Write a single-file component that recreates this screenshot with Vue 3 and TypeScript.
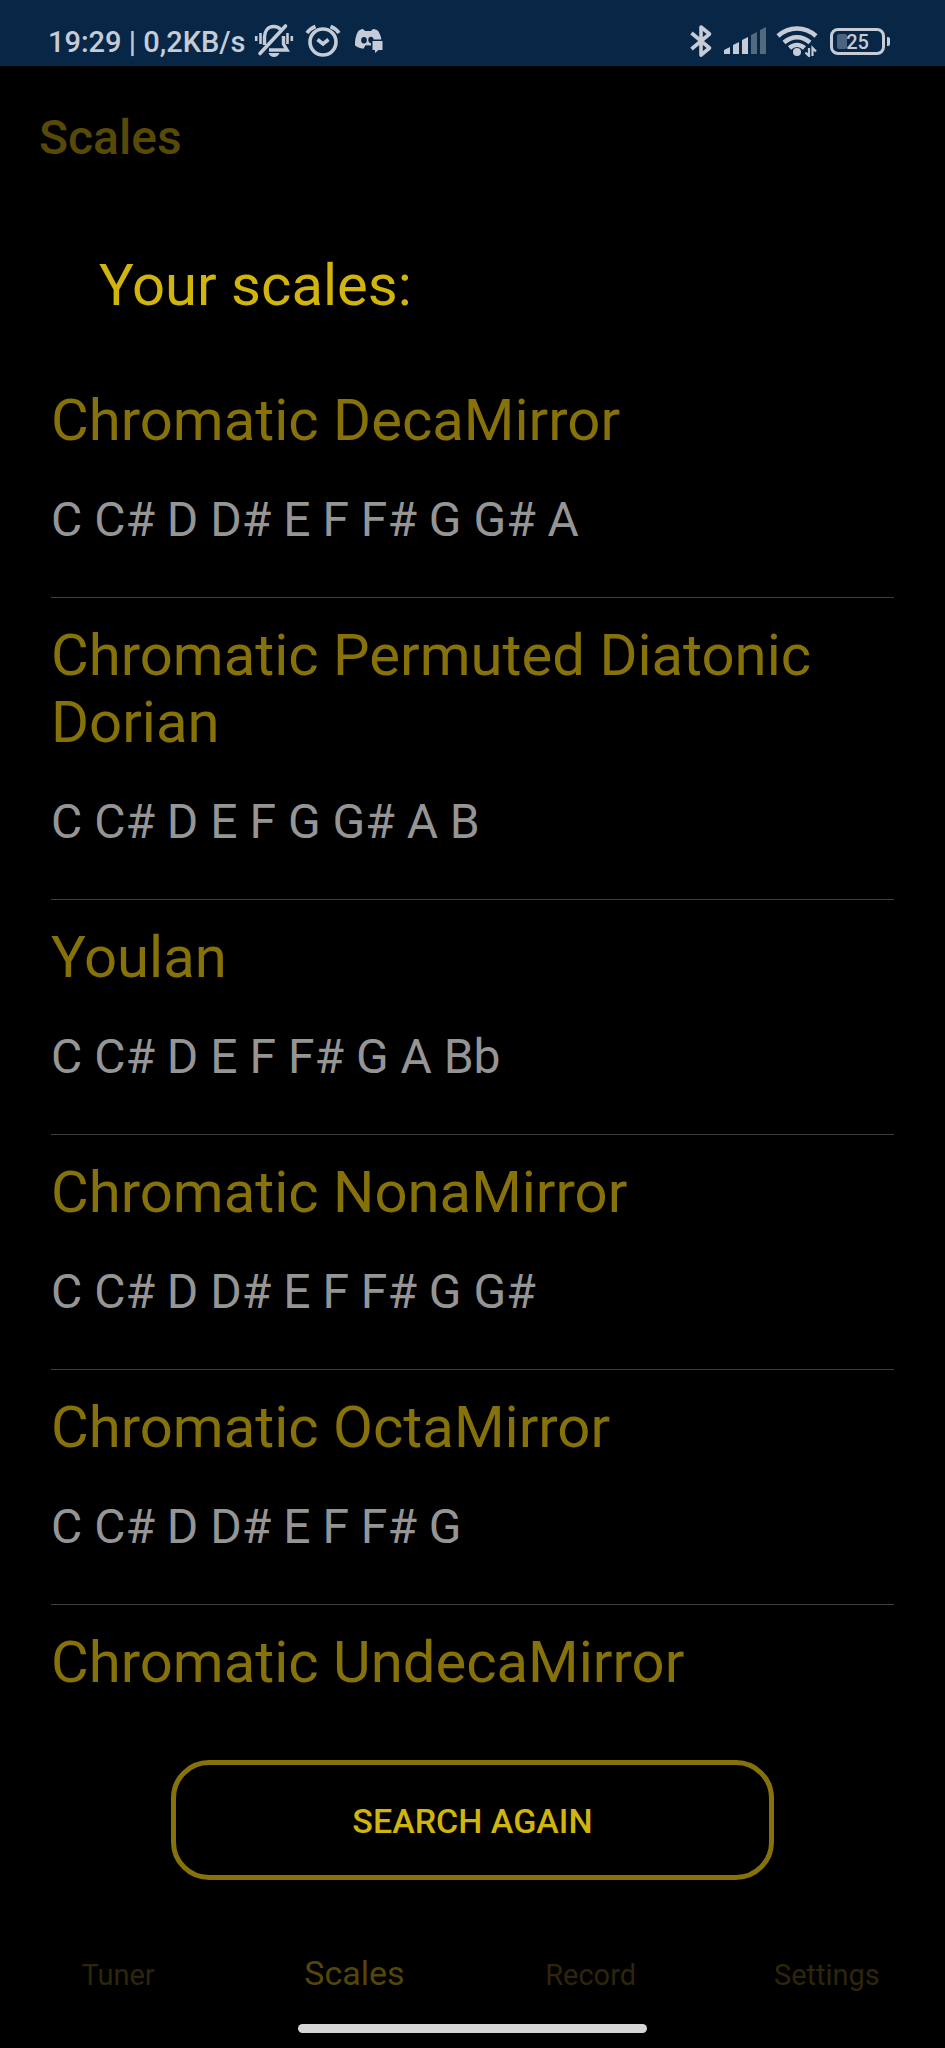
<script setup lang="ts">
import { ref } from 'vue'

interface Scale {
  name: string
  notes?: string
}

const scales: Scale[] = [
  { name: 'Chromatic DecaMirror', notes: 'C C# D D# E F F# G G# A' },
  { name: 'Chromatic Permuted Diatonic Dorian', notes: 'C C# D E F G G# A B' },
  { name: 'Youlan', notes: 'C C# D E F F# G A Bb' },
  { name: 'Chromatic NonaMirror', notes: 'C C# D D# E F F# G G#' },
  { name: 'Chromatic OctaMirror', notes: 'C C# D D# E F F# G' },
  { name: 'Chromatic UndecaMirror' },
]

const tabs: string[] = ['Tuner', 'Scales', 'Record', 'Settings']
const activeTab = ref<string>('Scales')
</script>

<template>
  <div class="screen">
    <div class="status">
      <div class="status-group">
        <span class="clock">19:29 | 0,2KB/s</span>
        <svg class="bell" width="40" height="36" viewBox="0 0 40 36" fill="none" stroke="currentColor">
          <path d="M10.500 22V14C10.500 8 14 3.500 19.500 3.500C22.500 3.500 25 4.500 26.500 6.500M29.500 13V21L33 27H15" stroke-width="3.400" />
          <path d="M6 30.500L31.500 3" stroke-width="3.600" stroke-linecap="round" />
          <path d="M6.500 10V21M2.200 13V18M33.500 10V21M37.800 13V18" stroke-width="2.600" />
          <path d="M14.500 30H25.500C24.500 32.500 22.500 34 20 34S15.500 32.500 14.500 30Z" fill="currentColor" stroke="none" />
        </svg>
        <svg class="alarm" width="36" height="36" viewBox="0 0 36 36" fill="none" stroke="currentColor" stroke-width="3.600">
          <circle cx="18" cy="19" r="13" />
          <path d="M2 10C4 7 6.500 5 10.500 3.500M34 10C32 7 29.500 5 25.500 3.500" stroke-width="3.800" />
          <path d="M12.500 16.500L18 21L23.500 16.500" />
        </svg>
        <svg class="chat" width="30" height="26" viewBox="0 0 30 26" fill="currentColor">
          <path fill-rule="evenodd" d="M9 1L11 3H17L19 1C21.500 1.300 23.500 2 24.500 3.500C26 6 27 8.500 27.300 11.500H19.500C19.500 9.800 18.500 8.800 17 8.800C15 8.800 14 10.500 14.300 12.500C14.500 14 15.500 15 17 15.200V17.500L11.500 17.300L9.500 20.800C5.500 20.500 3 19 1 17.500C.8 12 1.800 7.500 4 3.500C5.500 2 7 1.300 9 1ZM10 9A2.800 3.200 0 1 0 10 15.400A2.800 3.200 0 1 0 10 9Z" />
          <path d="M18.500 13H28.500V22H24.500L21 25V22H18.500Z" />
        </svg>
      </div>
      <div class="status-group">
        <svg width="24" height="36" viewBox="0 0 24 36" fill="none" stroke="currentColor" stroke-width="3.600">
          <path d="M2.500 10L20.500 25L12 32V4L20.500 11L2.500 26" stroke-linejoin="round" />
        </svg>
        <svg class="signal" width="44" height="28" viewBox="0 0 44 28" fill="currentColor">
          <path d="M1 23L7 20V27H1ZM10 18L16 15V27H10ZM19 13L25 10V27H19Z" />
          <path d="M28 8L34 5V27H28ZM37 3L43 0V27H37Z" opacity=".4" />
        </svg>
        <svg class="wifi" width="42" height="32" viewBox="0 0 42 32" fill="none" stroke="currentColor" stroke-width="4.600">
          <path d="M2 11C13 1 29 1 40 11M8 17.500C16 10.500 26 10.500 34 17.500M13.500 23C18 19 24 19 28.500 23" />
          <circle cx="21" cy="27" r="4" fill="currentColor" stroke="none" />
          <path d="M33 23V31L29.500 27.500M36.500 31V23L40 26.500" stroke-width="2.200" />
        </svg>
        <div class="battery">
          <span class="level"></span>
          <span class="percent">25</span>
        </div>
      </div>
    </div>

    <header class="bar"><h1>Scales</h1></header>
    <h2 class="intro">Your scales:</h2>

    <ul class="list">
      <li v-for="scale in scales" :key="scale.name" class="item">
        <h3>{{ scale.name }}</h3>
        <p v-if="scale.notes">{{ scale.notes }}</p>
      </li>
    </ul>

    <div class="actions">
      <button type="button" class="again">SEARCH AGAIN</button>
    </div>

    <nav class="tabs">
      <button
        v-for="tab in tabs"
        :key="tab"
        type="button"
        class="tab"
        :class="{ active: tab === activeTab }"
        @click="activeTab = tab"
      >{{ tab }}</button>
    </nav>
    <div class="home"></div>
  </div>
</template>

<style>
body {
  margin: 0;
  background: #000;
}
</style>

<style scoped>
.screen {
  display: flex;
  flex-direction: column;
  height: 100vh;
  background: #000;
  font-family: Roboto, "Liberation Sans", sans-serif;
}

.status {
  display: flex;
  flex: none;
  justify-content: space-between;
  box-sizing: border-box;
  height: 66px;
  padding: 16px 60px 0 48px;
  background: #082746;
  color: #c5ccd7;
}

.status-group {
  display: flex;
  align-items: center;
  height: 50px;
}

.clock {
  padding-top: 2px;
  font-size: 29px;
  font-weight: 500;
  line-height: 36px;
}

.bell {
  margin-left: 8px;
}

.alarm {
  margin-left: 11px;
}

.chat {
  margin-left: 13px;
}

.signal {
  margin-left: 10px;
}

.wifi {
  margin-left: 9px;
}

.battery {
  position: relative;
  box-sizing: border-box;
  width: 55px;
  height: 27px;
  margin-left: 12px;
  border: 3px solid currentColor;
  border-radius: 8px;
  text-align: center;
}

.battery::after {
  content: "";
  position: absolute;
  top: 6px;
  right: -8px;
  width: 3px;
  height: 9px;
  border-radius: 0 2px 2px 0;
  background: currentColor;
}

.level {
  position: absolute;
  inset: 3px auto 3px 4px;
  width: 10px;
  border-radius: 2px;
  background: #4c647e;
}

.percent {
  position: relative;
  display: block;
  font-size: 20px;
  font-weight: 500;
  line-height: 22px;
}

.bar {
  display: flex;
  flex: none;
  align-items: center;
  height: 130px;
  padding: 14px 39px 0;
  box-sizing: border-box;
}

h1,
h2,
h3,
p {
  margin: 0;
  font-weight: 400;
}

h1 {
  color: #584907;
  font-size: 48px;
  font-weight: 500;
  line-height: 56px;
}

h2,
h3 {
  font-size: 58px;
  line-height: 67px;
}

.intro {
  flex: none;
  padding: 56px 99px 44px;
  color: #d1b40c;
}

.list {
  flex: 1 1 0;
  min-height: 0;
  margin: 0 51px;
  padding: 0;
  overflow-y: auto;
  scrollbar-width: none;
  list-style: none;
}

.item {
  padding: 24px 0 49px;
  border-bottom: 1px solid #3e3e3e;
}

h3 {
  color: #87720a;
}

.item p {
  margin-top: 38px;
  color: #959595;
  font-size: 48px;
  line-height: 56px;
}

.actions {
  display: flex;
  flex: none;
  justify-content: center;
  padding: 49px 171px 56px;
}

.again {
  flex: 1;
  height: 120px;
  padding: 2px 0 0;
  border: 5px solid #87720a;
  border-radius: 38px;
  background: #000;
  color: #d1b40c;
  font: 500 34px/40px Roboto, "Liberation Sans", sans-serif;
}

.tabs {
  display: grid;
  flex: none;
  grid-template-columns: repeat(4, 1fr);
  align-items: baseline;
  padding: 17px 0 29px;
}

.tab {
  padding: 0;
  border: 0;
  background: none;
  color: #2d260a;
  font: 400 29px/40px Roboto, "Liberation Sans", sans-serif;
}

.tab.active {
  color: #54460a;
  font-size: 34px;
}

.home {
  flex: none;
  width: 37%;
  height: 9px;
  margin: 0 auto 15px;
  border-radius: 5px;
  background: #d6d6d6;
}
</style>
